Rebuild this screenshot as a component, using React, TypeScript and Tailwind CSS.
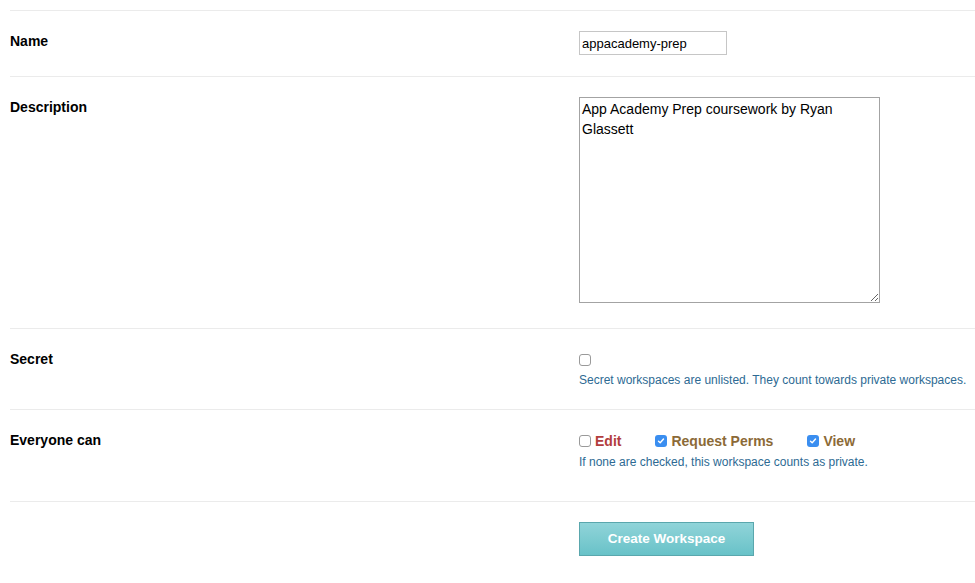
const Check = ({ checked }: { checked: boolean }) =>
  checked ? (
    <span className="flex h-[12px] w-[12px] items-center justify-center rounded-[3px] bg-[#3a8ef0]">
      <svg width="8" height="8" viewBox="0 0 8 8" fill="none">
        <path d="M1.5 4.2 3.2 5.8 6.5 2" stroke="#fff" strokeWidth="1.4" strokeLinecap="round" strokeLinejoin="round" />
      </svg>
    </span>
  ) : (
    <span className="block h-[12px] w-[12px] rounded-[3px] border border-[#9a9a9a] bg-white"></span>
  );

const Row = ({ label, children, pb = "pb-[21px]" }: { label?: string; children: React.ReactNode; pb?: string }) => (
  <div className={`grid grid-cols-[569px_1fr] border-t border-[#ebebeb] pt-[20px] ${pb}`}>
    <div className="text-[14px] font-bold leading-[20px] text-black">{label}</div>
    <div>{children}</div>
  </div>
);

export default function App() {
  return (
    <div className="min-h-[583px] bg-white pt-[10px] pl-[10px] font-['Liberation_Sans',Arial,sans-serif]">
      <Row label="Name">
        <input
          defaultValue="appacademy-prep"
          className="block h-[24px] w-[148px] border border-[#c6c6c6] px-[2px] text-[13px] text-black outline-none"
        />
      </Row>
      <Row label="Description">
        <textarea
          defaultValue="App Academy Prep coursework by Ryan Glassett"
          className="mb-[4px] block h-[206px] w-[301px] border border-[#a3a3a3] px-[2px] py-[1px] text-[14px] leading-[20px] text-black outline-none"
        />
      </Row>
      <Row label="Secret" pb="pb-[19px]">
        <div className="flex h-[21px] items-center">
          <Check checked={false} />
        </div>
        <p className="text-[12px] leading-[20px] text-[#2d6a93]">
          Secret workspaces are unlisted. They count towards private workspaces.
        </p>
      </Row>
      <Row label="Everyone can">
        <div className="flex h-[22px] items-center gap-[34px] text-[14px] font-bold">
          <label className="flex items-center gap-[4px] text-[#b23d3d]">
            <Check checked={false} />
            Edit
          </label>
          <label className="flex items-center gap-[4px] text-[#8c6a37]">
            <Check checked={true} />
            Request Perms
          </label>
          <label className="flex items-center gap-[4px] text-[#8c6a37]">
            <Check checked={true} />
            View
          </label>
        </div>
        <p className="text-[12px] leading-[20px] text-[#2d6a93]">
          If none are checked, this workspace counts as private.
        </p>
        <div className="h-[8px]"></div>
      </Row>
      <Row>
        <button className="h-[34px] w-[175px] border border-[#5aa7ad] bg-gradient-to-b from-[#90d4d9] to-[#68c2c8] text-[13.5px] font-bold text-white">
          Create Workspace
        </button>
      </Row>
    </div>
  );
}
